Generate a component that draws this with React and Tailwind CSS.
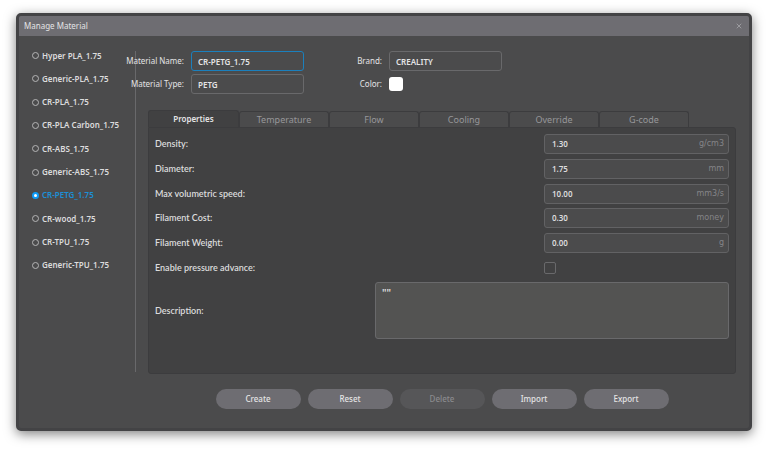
import React, { useState } from "react";
import { X } from "lucide-react";

const MATERIALS = [
    "Hyper PLA_1.75",
    "Generic-PLA_1.75",
    "CR-PLA_1.75",
    "CR-PLA Carbon_1.75",
    "CR-ABS_1.75",
    "Generic-ABS_1.75",
    "CR-PETG_1.75",
    "CR-wood_1.75",
    "CR-TPU_1.75",
    "Generic-TPU_1.75",
];

const TABS = ["Properties", "Temperature", "Flow", "Cooling", "Override", "G-code"];

const PROPERTIES = [
    { id: "density", label: "Density:", value: "1.30", unit: "g/cm3" },
    { id: "diameter", label: "Diameter:", value: "1.75", unit: "mm" },
    { id: "speed", label: "Max volumetric speed:", value: "10.00", unit: "mm3/s" },
    { id: "cost", label: "Filament Cost:", value: "0.30", unit: "money" },
    { id: "weight", label: "Filament Weight:", value: "0.00", unit: "g" },
];

const ACTIONS = [
    { label: "Create" },
    { label: "Reset" },
    { label: "Delete", disabled: true },
    { label: "Import" },
    { label: "Export" },
];

const MaterialList = ({ selected, onSelect }) => (
    <div className="w-[117px] shrink-0 border-r border-[#69696b] pl-[13px]">
        <div role="radiogroup" aria-label="Materials" className="flex h-[219px] flex-col justify-between font-semibold text-[#dcdcdd]">
            {MATERIALS.map((name) => (
                <label
                    key={name}
                    className={`flex h-[9px] items-center gap-[3px] whitespace-nowrap ${selected === name ? "text-[#1c8fd6]" : ""}`}
                >
                    <input
                        type="radio"
                        name="material"
                        checked={selected === name}
                        onChange={() => onSelect(name)}
                        className="size-[7px] shrink-0 appearance-none rounded-full border border-[#b5b5b6] checked:border-2 checked:border-[#0f9bf5] checked:bg-white"
                    />
                    {name}
                </label>
            ))}
        </div>
    </div>
);

const TextField = ({ id, label, value, active }) => (
    <div className="flex items-center gap-[7px]">
        <label htmlFor={id} className="flex w-9 justify-end whitespace-nowrap">{label}</label>
        <input
            id={id}
            defaultValue={value}
            className={`h-5 w-[113px] rounded-[3px] border bg-transparent px-1.5 font-semibold outline-none ${active ? "border-[#1b80bd]" : "border-[#69696b]"}`}
        />
    </div>
);

const PropertiesPanel = () => (
    <div className="h-[247px] rounded-b-[3px] rounded-tr-[3px] border border-[#3c3c3e] bg-[#414142] px-1.5 pt-1 font-['Lato',sans-serif] text-[9px] font-semibold text-[#dcdcdd]">
        <div className="grid h-[148px] grid-rows-6">
            {PROPERTIES.map((item) => (
                <div key={item.id} className="flex items-center justify-between">
                    <label htmlFor={item.id}>{item.label}</label>
                    <div className="flex h-5 w-[185px] items-center rounded-[3px] border border-[#626264] bg-[#4b4b4c] pr-1 pl-[7px] text-[8px]">
                        <input
                            id={item.id}
                            defaultValue={item.value}
                            className="min-w-0 flex-1 bg-transparent font-['Noto_Sans',sans-serif] outline-none"
                        />
                        <span className="font-['DejaVu_Sans',sans-serif] font-normal text-[#858588]">{item.unit}</span>
                    </div>
                </div>
            ))}
            <div className="flex items-center justify-between">
                <label htmlFor="advance">Enable pressure advance:</label>
                <div className="flex w-[185px]">
                    <input
                        id="advance"
                        type="checkbox"
                        className="size-3 appearance-none rounded-xs border border-[#69696b] checked:bg-[#0f9bf5]"
                    />
                </div>
            </div>
        </div>
        <div className="mt-[2px] grid grid-cols-[220px_1fr] items-center">
            <label htmlFor="description">Description:</label>
            <textarea
                id="description"
                defaultValue={'""'}
                className="h-[57px] w-full resize-none rounded-[3px] border border-[#69696b] bg-[#535352] px-1.5 py-1 font-['Noto_Sans',sans-serif] text-[10px] outline-none"
            />
        </div>
    </div>
);

const App = () => {
    const [material, setMaterial] = useState("CR-PETG_1.75");
    const [tab, setTab] = useState("Properties");

    return (
        <div className="min-h-screen bg-white px-4 pt-[13px] pb-4 font-['Noto_Sans',sans-serif] text-[8px] leading-3 text-[#e4e4e5]">
            <div className="rounded-[5px] border-3 border-[#434345] bg-[#4b4b4c] shadow-[0_3px_12px_rgba(0,0,0,0.5)]">
                <header className="flex h-5 items-center justify-between rounded-t-xs bg-[#6e6d72] pr-1.5 pl-[5px]">
                    <h1>Manage Material</h1>
                    <button type="button" aria-label="Close" className="text-[#9b9b9f]">
                        <X size={8} strokeWidth={3} />
                    </button>
                </header>

                <div className="flex pt-[15px] pr-[13px] pb-[19px]">
                    <div className="flex h-[321px]">
                        <MaterialList selected={material} onSelect={setMaterial} />
                    </div>

                    <main className="ml-3 min-w-0 flex-1">
                        <div className="grid w-fit grid-cols-2 gap-x-[42px] gap-y-[3px]">
                            <TextField id="name" label="Material Name:" value="CR-PETG_1.75" active />
                            <TextField id="brand" label="Brand:" value="CREALITY" />
                            <TextField id="type" label="Material Type:" value="PETG" />
                            <div className="flex items-center gap-[7px]">
                                <span className="flex w-9 justify-end">Color:</span>
                                <button type="button" aria-label="Color" className="size-[14px] rounded-[3px] bg-white" />
                            </div>
                        </div>

                        <div role="tablist" className="mt-4 flex h-[17px] items-end text-[9px]">
                            {TABS.map((name) => (
                                <button
                                    key={name}
                                    type="button"
                                    role="tab"
                                    aria-selected={tab === name}
                                    onClick={() => setTab(name)}
                                    className={`rounded-t-[3px] border border-b-0 border-[#3c3c3e] ${tab === name ? "h-[17px] w-[91px] bg-[#414142] text-[8px] font-semibold" : "h-4 w-[90px] text-[#97979a]"}`}
                                >
                                    {name}
                                </button>
                            ))}
                        </div>
                        <PropertiesPanel />

                        <div className="mt-[15px] flex justify-center gap-[7px]">
                            {ACTIONS.map((action) => (
                                <button
                                    key={action.label}
                                    type="button"
                                    disabled={action.disabled}
                                    className="h-5 w-[85px] rounded-full bg-[#6e6d72] font-medium disabled:bg-[#565658] disabled:text-[#8b8b8e]"
                                >
                                    {action.label}
                                </button>
                            ))}
                        </div>
                    </main>
                </div>
            </div>
        </div>
    );
};

export default App;
